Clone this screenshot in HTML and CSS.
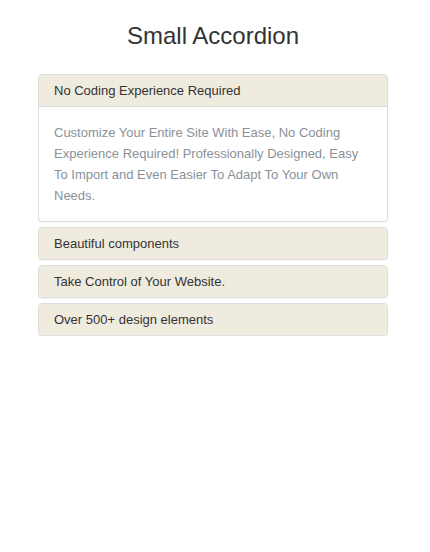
FILE: index.html
```html
<!DOCTYPE html>
<html>
<head>
<meta charset="utf-8">
<link rel="stylesheet" href="styles.css">
</head>
<body>
<div class="wrap">
  <h1 class="title">Small Accordion</h1>
  <div class="accordion">
    <div class="panel open">
      <div class="panel-heading">No Coding Experience Required</div>
      <div class="panel-body">Customize Your Entire Site With Ease, No Coding Experience Required! Professionally Designed, Easy To Import and Even Easier To Adapt To Your Own Needs.</div>
    </div>
    <div class="panel">
      <div class="panel-heading">Beautiful components</div>
    </div>
    <div class="panel">
      <div class="panel-heading">Take Control of Your Website.</div>
    </div>
    <div class="panel">
      <div class="panel-heading">Over 500+ design elements</div>
    </div>
  </div>
</div>
</body>
</html>
```
FILE: styles.css
```css
html, body {
  margin: 0;
  padding: 0;
  background: #fff;
}
body {
  font-family: "Liberation Sans", Arial, sans-serif;
  font-size: 13px;
  color: #333;
}
.wrap {
  padding: 20px 42px 0 38px;
}
.title {
  margin: 0 0 22px;
  font-size: 24px;
  font-weight: 400;
  line-height: 32px;
  text-align: center;
  color: #333;
}
.accordion {
  display: flex;
  flex-direction: column;
  gap: 5px;
}
.panel {
  border: 1px solid #ddd;
  border-radius: 4px;
  background: #fff;
  box-shadow: 0 1px 1px rgba(0,0,0,.05);
  overflow: hidden;
}
.panel-heading {
  background: #efebdf;
  padding: 6px 15px 5px;
  line-height: 20px;
  color: #333;
}
.panel.open .panel-heading {
  border-bottom: 1px solid #ddd;
}
.panel-body {
  padding: 15px 15px 15px;
  line-height: 21px;
  color: #8a9199;
}
```
